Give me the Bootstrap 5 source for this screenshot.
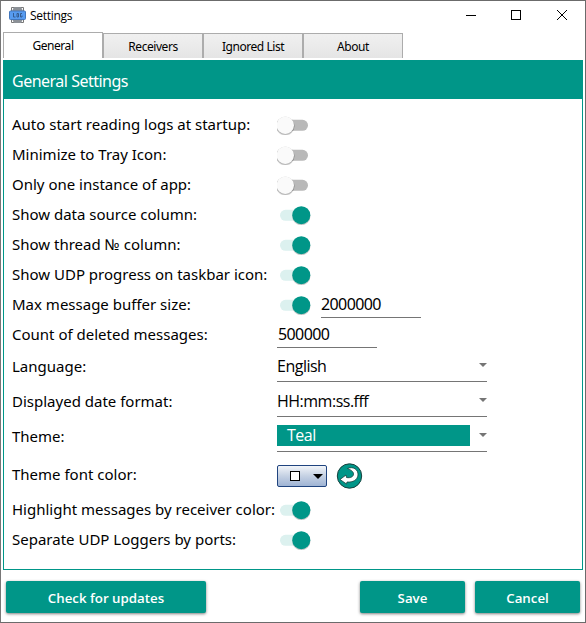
<!DOCTYPE html>
<html lang="en">
<head>
<meta charset="utf-8">
<meta name="viewport" content="width=device-width, initial-scale=1">
<title>Settings</title>
<link href="https://cdn.jsdelivr.net/npm/bootstrap@5.3.0/dist/css/bootstrap.min.css" rel="stylesheet">
<style>
:root{--teal:#009688}
body{font-family:"Noto Sans","Open Sans",sans-serif;font-size:15px;color:#000;line-height:20px}
.window{width:586px;height:623px;border:1px solid #6b6b6b;border-left-color:#777;padding:0 2px}
.titlebar{height:31px;padding-left:6px;font:12px/28px "Open Sans",sans-serif}
.titlebar .caption{margin-left:4px;padding-top:1px;height:29px;letter-spacing:-.3px}
.winbtns{margin-top:-1px}
.settings-tabs{height:28px;font-size:12px;letter-spacing:-.45px}
.settings-tabs .nav-link{width:100px;height:25px;margin-top:1px;padding:0;border:1px solid #acacac;border-bottom:0;border-radius:0;background:linear-gradient(#f0f0f0,#e5e5e5);color:#000;line-height:25px;text-align:center}
.settings-tabs .nav-link.active{height:26px;margin-top:0;background:#fff;line-height:25px}
.panel{height:510px;border:1px solid var(--teal)}
.panel-head{height:39px;margin:-1px -1px 11px;padding:0 9px;background:var(--teal);color:#fff;font-size:16px;line-height:42px;letter-spacing:-.5px}
.setting{height:30px;padding-left:8px}
.setting.mid{height:35px}
.setting.tall{height:40px}
.setting .name{width:265px;white-space:nowrap;padding-bottom:2px}
.setting.mid .name{padding-bottom:4px}
.switch{width:35px;height:20px}
.field{width:100px;height:27px;border:0;border-bottom:1px solid #757575;border-radius:0;margin:0 0 2px;padding:1px 1px 1px;font-size:16px;letter-spacing:-.6px;color:#000;background:none;line-height:20px}
.switch + .field{margin-left:9px;padding-left:0}
.picker{width:210px;height:29px;border-bottom:1px solid #757575;padding-bottom:4px;font:16px/21px "Open Sans",sans-serif;letter-spacing:-.5px}
.picker .value{padding-top:2px}
.swatch{width:193px;height:21px;background:var(--teal);color:#fff;padding-left:10px;line-height:20px}
.arrow{width:0;border:4px solid transparent;border-top-color:#757575;border-bottom:0}
.colorbtn{width:50px;height:22px;margin-top:2px;border:1px solid #20447f;border-radius:2px;background:linear-gradient(#f2f5f9,#c5d1e3 50%,#9fb4d4)}
.footer-row{padding:11px 3px 0;gap:10px}
.action{height:32px;padding:0;border:0;border-radius:2px;background:var(--teal);color:#fff;font:600 13.300px/34px "Open Sans",sans-serif;box-shadow:0 1px 3px rgba(0,0,0,.5)}
.action-wide{width:200px}
.action-small{width:105px}
</style>
</head>
<body class="bg-white m-0 overflow-hidden">
<svg class="d-none">
  <symbol id="off" viewBox="0 0 35 20"><rect x="3" y="4.800" width="28" height="11" rx="5.500" fill="#b9b9b9"/><circle cx="8.300" cy="11.200" r="9.200" fill="#000" opacity=".18"/><circle cx="8.300" cy="10.600" r="9.100" fill="#000" opacity=".16"/><circle cx="8.300" cy="10.200" r="8.700" fill="#fafafa"/></symbol>
  <symbol id="on" viewBox="0 0 35 20"><rect x="3" y="4.800" width="28" height="11" rx="5.500" fill="#dcf1ef"/><circle cx="24.300" cy="11.100" r="9.200" fill="#000" opacity=".2"/><circle cx="24.300" cy="10.200" r="9" fill="#009688"/></symbol>
</svg>
<main class="window d-flex flex-column">
  <header class="titlebar d-flex align-items-start justify-content-between">
    <div class="d-flex">
      <svg class="mt-1" width="17" height="20" viewBox="0 0 17 20"><path d="M2.500 6V2.500H5M12 2.500h2.500V6M2.500 14v3.500H5M12 17.500h2.500V14" fill="none" stroke="#777"/><path d="M5 2h7l2 4v8l-2 4H5l-2-4V6z" fill="#8b9096"/><rect x=".5" y="6" width="16" height="8.500" rx="1" fill="#579bf0" stroke="#4277bd"/><path d="M4.500 8v4h2M8 8.500h1.500v3.500H8zM13 8.500h-1.500V12H13v-1.500" fill="none" stroke="#355c91"/></svg>
      <span class="caption">Settings</span>
    </div>
    <svg class="winbtns" width="120" height="30" viewBox="0 0 120 30" fill="none" stroke="#000"><path d="M3 15.500h10"/><rect x="48.500" y="10.500" width="9" height="9"/><path d="M94 10l10 10M104 10L94 20"/></svg>
  </header>
  <nav class="nav settings-tabs align-items-start">
    <a class="nav-link active">General</a><a class="nav-link">Receivers</a><a class="nav-link">Ignored List</a><a class="nav-link">About</a>
  </nav>
  <section class="panel">
    <h1 class="panel-head fw-normal">General Settings</h1>
    <div class="setting d-flex align-items-center"><span class="name">Auto start reading logs at startup:</span><svg class="switch"><use href="#off"/></svg></div>
    <div class="setting d-flex align-items-center"><span class="name">Minimize to Tray Icon:</span><svg class="switch"><use href="#off"/></svg></div>
    <div class="setting d-flex align-items-center"><span class="name">Only one instance of app:</span><svg class="switch"><use href="#off"/></svg></div>
    <div class="setting d-flex align-items-center"><span class="name">Show data source column:</span><svg class="switch"><use href="#on"/></svg></div>
    <div class="setting d-flex align-items-center"><span class="name">Show thread № column:</span><svg class="switch"><use href="#on"/></svg></div>
    <div class="setting d-flex align-items-center"><span class="name">Show UDP progress on taskbar icon:</span><svg class="switch"><use href="#on"/></svg></div>
    <div class="setting d-flex align-items-center"><span class="name">Max message buffer size:</span><svg class="switch"><use href="#on"/></svg><input class="field" value="2000000"></div>
    <div class="setting d-flex align-items-center"><span class="name">Count of deleted messages:</span><input class="field" value="500000"></div>
    <div class="setting mid d-flex align-items-center"><span class="name">Language:</span><div class="picker d-flex align-items-center justify-content-between"><span class="value">English</span><i class="arrow"></i></div></div>
    <div class="setting mid d-flex align-items-center"><span class="name">Displayed date format:</span><div class="picker d-flex align-items-center justify-content-between"><span class="value">HH:mm:ss.fff</span><i class="arrow"></i></div></div>
    <div class="setting mid d-flex align-items-center"><span class="name">Theme:</span><div class="picker d-flex align-items-center justify-content-between"><span class="swatch">Teal</span><i class="arrow"></i></div></div>
    <div class="setting tall d-flex align-items-center"><span class="name">Theme font color:</span>
      <button class="colorbtn p-0" aria-label="Color"><svg class="d-block" width="48" height="20"><rect x="12.500" y="5.500" width="9" height="9" fill="#fff" stroke="#000"/><path d="M35 8h10l-5 5z"/></svg></button>
      <svg class="ms-2" width="30" height="28" viewBox="0 0 30 28"><circle cx="14.500" cy="15" r="12.200" fill="#009688" stroke="#173f3c"/><path d="M12.500 7.500C18 5 23.500 8.500 23 14c-.5 5-5 7.500-11 7l-.5 2L5 18.500l6-4.500.5 2.500c4 .8 7-.8 7-3.500 0-2.500-2.500-4-6-5.500z" fill="#fff" stroke="#173f3c" stroke-width=".8"/></svg>
    </div>
    <div class="setting d-flex align-items-center"><span class="name">Highlight messages by receiver color:</span><svg class="switch"><use href="#on"/></svg></div>
    <div class="setting d-flex align-items-center"><span class="name">Separate UDP Loggers by ports:</span><svg class="switch"><use href="#on"/></svg></div>
  </section>
  <footer class="d-flex footer-row">
    <button class="btn action action-wide me-auto">Check for updates</button>
    <button class="btn action action-small">Save</button>
    <button class="btn action action-small">Cancel</button>
  </footer>
</main>
<script src="https://cdn.jsdelivr.net/npm/bootstrap@5.3.0/dist/js/bootstrap.bundle.min.js"></script>
</body>
</html>
